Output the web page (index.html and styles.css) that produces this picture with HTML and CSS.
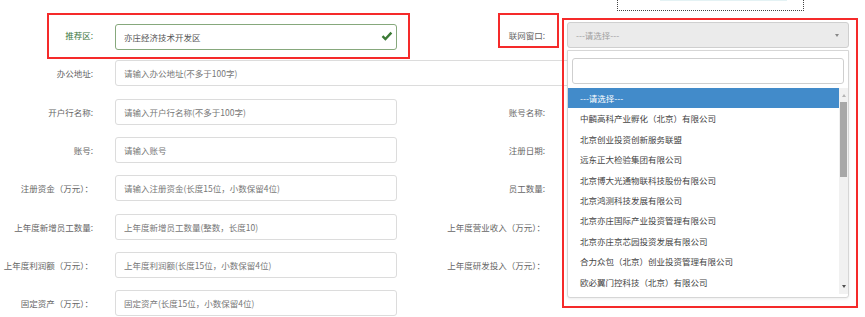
FILE: index.html
```html
<!DOCTYPE html>
<html lang="zh-CN">
<head>
  <meta charset="UTF-8">
  <title>企业信息</title>
  <link rel="stylesheet" href="styles.css">
</head>
<body>
  <div class="page">
    <!-- 顶部虚线框（被截断） -->
    <div class="dotted-box"><span class="dotted-line"></span></div>

    <div class="form">
      <label class="lbl lbl-ok">推荐区:</label>
      <div class="field">
        <input class="inp inp-ok" value="亦庄经济技术开发区">
        <svg class="ok-icon" width="12" height="10" viewBox="0 0 12 10">
          <path d="M1.5 5.2 L4.4 8 L10.4 1.6" fill="none" stroke="#3b7a35" stroke-width="2.4" stroke-linejoin="miter"/>
        </svg>
      </div>
      <label class="lbl">联网窗口:</label>
      <div class="field">
        <div class="select">---请选择---<span class="caret"></span></div>
        <!-- 下拉面板 -->
        <div class="dropdown">
          <input class="search">
          <div class="results">
            <ul class="options">
              <li class="active">---请选择---</li>
              <li>中麟高科产业孵化（北京）有限公司</li>
              <li>北京创业投资创新服务联盟</li>
              <li>远东正大检验集团有限公司</li>
              <li>北京博大光通物联科技股份有限公司</li>
              <li>北京鸿测科技发展有限公司</li>
              <li>北京亦庄国际产业投资管理有限公司</li>
              <li>北京亦庄京芯园投资发展有限公司</li>
              <li>合力众包（北京）创业投资管理有限公司</li>
              <li>欧必翼门控科技（北京）有限公司</li>
            </ul>
            <div class="scrollbar">
              <span class="arrow-up"></span>
              <span class="thumb"></span>
              <span class="arrow-down"></span>
            </div>
          </div>
        </div>
      </div>

      <label class="lbl">办公地址:</label>
      <input class="inp wide" placeholder="请输入办公地址(不多于100字)">

      <label class="lbl">开户行名称:</label>
      <input class="inp" placeholder="请输入开户行名称(不多于100字)">
      <label class="lbl">账号名称:</label>
      <input class="inp">

      <label class="lbl">账号:</label>
      <input class="inp" placeholder="请输入账号">
      <label class="lbl">注册日期:</label>
      <input class="inp">

      <label class="lbl">注册资金（万元）：</label>
      <input class="inp" placeholder="请输入注册资金(长度15位，小数保留4位)">
      <label class="lbl">员工数量:</label>
      <input class="inp">

      <label class="lbl">上年度新增员工数量:</label>
      <input class="inp" placeholder="上年度新增员工数量(整数，长度10)">
      <label class="lbl">上年度营业收入（万元）：</label>
      <input class="inp">

      <label class="lbl">上年度利润额（万元）：</label>
      <input class="inp" placeholder="上年度利润额(长度15位，小数保留4位)">
      <label class="lbl">上年度研发投入（万元）：</label>
      <input class="inp">

      <label class="lbl">固定资产（万元）：</label>
      <input class="inp" placeholder="固定资产(长度15位，小数保留4位)">
      <span></span>
      <span></span>
    </div>

    <!-- 红色标注框 -->
    <div class="mark mark-1"></div>
    <div class="mark mark-2"></div>
    <div class="mark mark-3"></div>
  </div>
</body>
</html>
```

FILE: styles.css
```css
body {
  margin: 0;
  background: #fff;
  font-family: "Noto Sans CJK SC", "Microsoft YaHei", sans-serif;
  overflow: hidden;
}
.page {
  position: relative;
  width: 865px;
  height: 317px;
  overflow: hidden;
}
.form {
  display: grid;
  grid-template-columns: 115px 282px 170px 282px;
  grid-auto-rows: 26px;
  row-gap: 12.33px;
  padding-top: 22px;
}
.lbl {
  font-size: 8.5px;
  line-height: 26px;
  color: #666;
  text-align: right;
  padding-right: 22px;
  white-space: nowrap;
}
.lbl-ok {
  color: #3c763d;
}
.field {
  position: relative;
}
.inp {
  box-sizing: border-box;
  width: 282px;
  height: 26px;
  margin: 0;
  padding: 0 8px;
  border: 1px solid #dcdcdc;
  border-radius: 3px;
  font-family: inherit;
  font-size: 8.5px;
  color: #555;
  background: #fff;
  outline: none;
}
.inp::placeholder {
  color: #777;
}
.inp-ok {
  border-color: #86a87c;
}
.wide {
  grid-column: 2 / 5;
  width: 100%;
}
.ok-icon {
  position: absolute;
  right: 4px;
  top: 9px;
}
.select {
  box-sizing: border-box;
  height: 26px;
  padding-left: 8px;
  border: 1px solid #cfcfcf;
  border-radius: 3px;
  background: #ebebeb;
  color: #a0a0a0;
  font-size: 8.5px;
  line-height: 24px;
  position: relative;
}
.caret {
  position: absolute;
  right: 9px;
  top: 11px;
  border-left: 2.5px solid transparent;
  border-right: 2.5px solid transparent;
  border-top: 3px solid #888;
}
.dropdown {
  position: absolute;
  left: 0;
  top: 28px;
  width: 282px;
  height: 248px;
  box-sizing: border-box;
  background: #fff;
  border: 1px solid #d6d6d6;
  border-radius: 0 0 3px 3px;
  box-shadow: 0 1px 3px rgba(0,0,0,0.08);
  z-index: 2;
}
.search {
  display: block;
  box-sizing: border-box;
  width: 272px;
  height: 26px;
  margin: 7px 4px 4px;
  border: 1px solid #cfcfcf;
  border-radius: 3px;
  outline: none;
}
.results {
  display: flex;
  height: 206px;
}
.options {
  flex: 1;
  list-style: none;
  margin: 0;
  padding: 0;
  overflow: hidden;
}
.options li {
  height: 20.4px;
  line-height: 20.4px;
  padding-left: 12px;
  font-size: 8.5px;
  color: #444;
  white-space: nowrap;
}
.options li.active {
  background: #428bca;
  color: #fff;
}
.scrollbar {
  width: 9px;
  background: #f1f1f1;
  display: flex;
  flex-direction: column;
  align-items: center;
}
.arrow-up {
  margin-top: 6px;
  border-left: 2.5px solid transparent;
  border-right: 2.5px solid transparent;
  border-bottom: 3px solid #b5b5b5;
}
.thumb {
  margin-top: 5px;
  width: 7px;
  height: 75px;
  background: #a8a8a8;
}
.arrow-down {
  margin-top: auto;
  margin-bottom: 6px;
  border-left: 2.5px solid transparent;
  border-right: 2.5px solid transparent;
  border-top: 3px solid #505050;
}
.dotted-box {
  position: absolute;
  left: 617px;
  top: -12px;
  width: 185px;
  height: 21px;
  border: 1px dotted #444;
}
.dotted-line {
  position: absolute;
  left: 42px;
  right: 16px;
  top: 11px;
  height: 1px;
  background: #e4f2f4;
}
.mark {
  position: absolute;
  border: 2px solid #f52a2a;
  box-sizing: border-box;
  z-index: 3;
}
.mark-1 {
  left: 47px;
  top: 13px;
  width: 363px;
  height: 46px;
}
.mark-2 {
  left: 498px;
  top: 13px;
  width: 61px;
  height: 35px;
}
.mark-3 {
  left: 562px;
  top: 18px;
  width: 296px;
  height: 290px;
}
```
